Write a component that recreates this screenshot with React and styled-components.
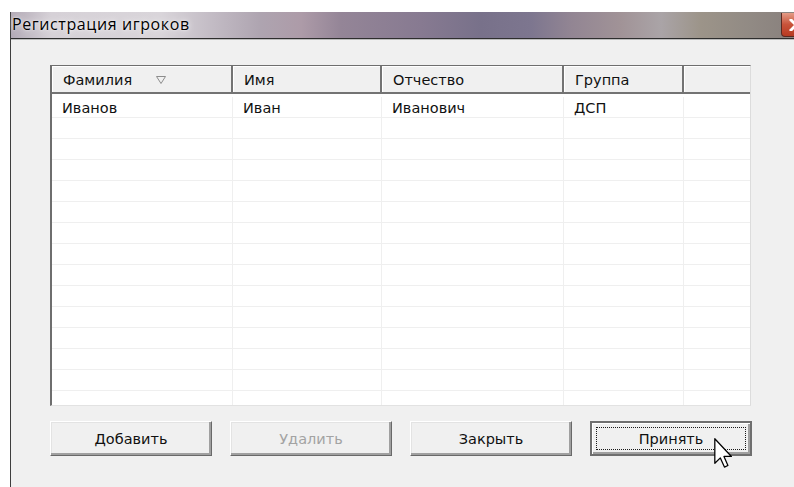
import React from "react";
import styled, { createGlobalStyle, css } from "styled-components";

const GlobalStyle = createGlobalStyle`
  html, body {
    margin: 0;
    background: #ffffff;
    overflow: hidden;
  }
`;

const COLUMNS = "181px 149px 182px 120px 1fr";

const Window = styled.div`
  margin: 12px 0 0 10px;
  width: 823px;
  height: 475px;
  display: flex;
  flex-direction: column;
  border-left: 1px solid #3e3e3e;
  box-sizing: border-box;
`;

const TitleBar = styled.div`
  height: 26px;
  display: flex;
  align-items: center;
  border-bottom: 1px solid #2e2e2e;
  background: linear-gradient(
    to right,
    #b3aab6 0px,
    #d6d1d7 40px,
    #d9d5da 150px,
    #c3bcc5 200px,
    #aea4b0 250px,
    #ad9ba8 290px,
    #948597 330px,
    #877a91 410px,
    #78718a 470px,
    #7d768f 520px,
    #928593 560px,
    #a19397 610px,
    #aaa4a7 650px,
    #9c9489 690px,
    #918a84 740px,
    #8b837f 770px
  );
`;

const Title = styled.span`
  flex: 1;
  padding: 0 0 3px 1px;
  font-family: "Open Sans", "Noto Sans", sans-serif;
  font-size: 16px;
  letter-spacing: 0.6px;
  color: #000;
  text-shadow: 0 0 6px rgba(255, 255, 255, 0.9), 0 0 2px rgba(255, 255, 255, 0.8);
`;

const CloseButton = styled.div`
  width: 43px;
  height: 24px;
  margin: 0 9px 1px 0;
  padding-left: 7px;
  align-self: flex-end;
  box-sizing: border-box;
  border: 1px solid #5b2a22;
  border-top: none;
  border-radius: 0 0 4px 4px;
  background: linear-gradient(to bottom, #e49b86, #c8533a 50%, #b73a22);
  display: flex;
  align-items: center;
`;

const Body = styled.div`
  flex: 1;
  background: #f0f0f0;
  border-top: 1px solid #bdbdbd;
  padding: 25px 0 0 39px;
  display: flex;
  flex-direction: column;
  gap: 15px;
`;

const ListView = styled.div`
  width: 701px;
  height: 341px;
  box-sizing: border-box;
  border-style: solid;
  border-width: 1px 1px 1px 2px;
  border-color: #6e6e6e #dcdcdc #e2e2e2 #6e6e6e;
  background: #ffffff;
  overflow: hidden;
  font-family: "DejaVu Sans", "Liberation Sans", sans-serif;
  font-size: 14.5px;
  color: #111;
`;

const HeaderRow = styled.div`
  display: grid;
  grid-template-columns: ${COLUMNS};
  height: 26px;
  background: #f0f0f0;
  border-bottom: 2px solid #737373;
`;

const HeaderCell = styled.div`
  display: flex;
  align-items: flex-start;
  gap: 24px;
  padding: 6px 0 0 11px;
  line-height: 16px;
  box-sizing: border-box;
  box-shadow: inset 1px 1px #ffffff;
  border-right: ${({ $last }) => ($last ? "none" : "2px solid #737373")};
`;

const SortMark = styled.svg`
  margin-top: 4px;
`;

const Rows = styled.div`
  padding-top: 3px;
`;

const Row = styled.div`
  display: grid;
  grid-template-columns: ${COLUMNS};
  height: 21px;
  box-sizing: border-box;
  border-bottom: 1px solid #efefef;
`;

const Cell = styled.div`
  padding: 3px 0 0 10px;
  line-height: 16px;
  border-right: ${({ $last }) => ($last ? "none" : "1px solid #efefef")};
  white-space: nowrap;
`;

const ButtonBar = styled.div`
  display: flex;
  gap: 18px;
`;

const Button = styled.button`
  position: relative;
  width: 162px;
  height: 35px;
  padding: 0;
  box-sizing: border-box;
  background: #f0f0f0;
  font-family: "DejaVu Sans", "Liberation Sans", sans-serif;
  font-size: 14.5px;
  color: #111;
  border: 1px solid;
  border-color: #ffffff #696969 #696969 #ffffff;
  box-shadow: inset -2px -2px #a0a0a0, inset 1px 1px #e3e3e3;

  &:disabled {
    color: #a3a3a3;
  }

  ${({ $primary }) =>
    $primary &&
    css`
      border: 2px solid #6f6f6f;
      box-shadow: inset 1px 1px #ffffff, inset -2px -2px #a0a0a0;

      &::after {
        content: "";
        position: absolute;
        inset: 4px;
        border: 1px dotted #1a1a1a;
      }
    `}
`;

const Pointer = styled.svg`
  position: absolute;
  left: 122px;
  top: 15px;
  z-index: 2;
`;

const columns = ["Фамилия", "Имя", "Отчество", "Группа", ""];
const players = [["Иванов", "Иван", "Иванович", "ДСП", ""]];
const EMPTY_ROWS = 14;

const App = () => {
  const rows = [...players];
  while (rows.length < EMPTY_ROWS + 1) rows.push(["", "", "", "", ""]);

  return (
    <>
      <GlobalStyle />
      <Window>
        <TitleBar>
          <Title>Регистрация игроков</Title>
          <CloseButton>
            <svg width="14" height="12" viewBox="0 0 14 12">
              <path
                d="M2 1 L12 11 M12 1 L2 11"
                stroke="#ffffff"
                strokeWidth="3"
                strokeLinecap="square"
              />
            </svg>
          </CloseButton>
        </TitleBar>
        <Body>
          <ListView>
            <HeaderRow>
              {columns.map((name, i) => (
                <HeaderCell key={i} $last={i === columns.length - 1}>
                  {name}
                  {i === 0 && (
                    <SortMark width="10" height="8" viewBox="0 0 10 8">
                      <path d="M0.5 0.5 H9.5 L5 7.5 Z" fill="none" stroke="#8c8c8c" strokeWidth="1" />
                    </SortMark>
                  )}
                </HeaderCell>
              ))}
            </HeaderRow>
            <Rows>
              {rows.map((row, r) => (
                <Row key={r}>
                  {row.map((value, c) => (
                    <Cell key={c} $last={c === row.length - 1}>
                      {value}
                    </Cell>
                  ))}
                </Row>
              ))}
            </Rows>
          </ListView>
          <ButtonBar>
            <Button>Добавить</Button>
            <Button disabled>Удалить</Button>
            <Button>Закрыть</Button>
            <Button $primary>
              Принять
              <Pointer width="19" height="30" viewBox="0 0 12 19">
                <path
                  d="M0.5 0.5 V16 L4 12.6 L6.6 18.4 L8.8 17.4 L6.3 11.7 H11 Z"
                  fill="#ffffff"
                  stroke="#000000"
                  strokeWidth="0.8"
                  strokeLinejoin="round"
                />
              </Pointer>
            </Button>
          </ButtonBar>
        </Body>
      </Window>
    </>
  );
};

export default App;
